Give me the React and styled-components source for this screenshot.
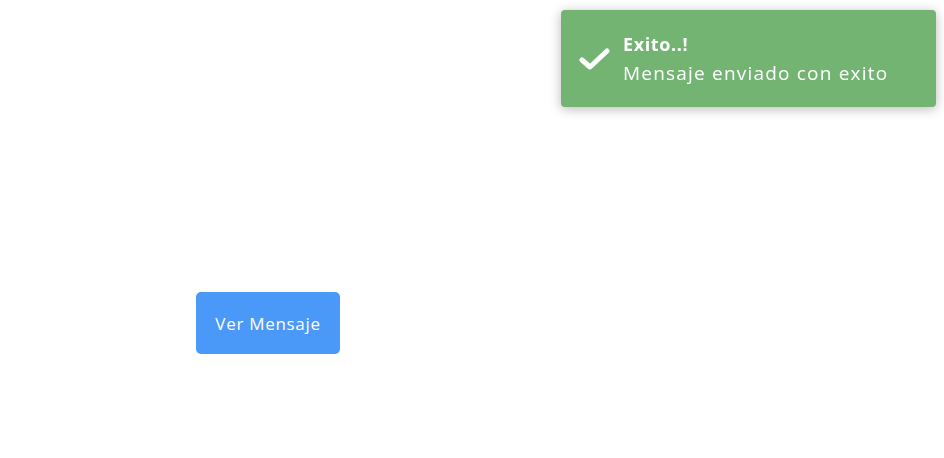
import styled, { createGlobalStyle } from "styled-components";

const GlobalStyle = createGlobalStyle`
    html, body {
        margin: 0;
        padding: 0;
        background: #ffffff;
        font-family: "Open Sans", "Liberation Sans", sans-serif;
    }
`;

const SPage = styled.main`
    min-height: 458px;
    padding: 292px 0 0 196px;
    box-sizing: border-box;
`;

const SButton = styled.button`
    width: 144px;
    height: 62px;
    padding: 0;
    border: none;
    border-radius: 5px;
    background: #4a99f8;
    color: #ffffff;
    font-family: inherit;
    font-size: 17px;
    letter-spacing: 0.7px;
    cursor: pointer;
`;

const SToast = styled.div`
    position: fixed;
    top: 10px;
    right: 8px;
    width: 375px;
    height: 97px;
    box-sizing: border-box;
    display: flex;
    align-items: center;
    gap: 13px;
    padding: 0 0 0 17px;
    background: #73b473;
    border-radius: 4px;
    color: #ffffff;
    box-shadow: 0 2px 12px rgba(0, 0, 0, 0.28);
`;

const SToastText = styled.div`
    display: flex;
    flex-direction: column;
    gap: 5px;
    margin-top: 2px;
`;

const SToastTitle = styled.strong`
    font-size: 18px;
    line-height: 22px;
    font-weight: 700;
    letter-spacing: 0.6px;
`;

const SToastMessage = styled.span`
    font-size: 19px;
    line-height: 26px;
    letter-spacing: 1.2px;
`;

function CheckIcon() {
    return (
        <svg width="32" height="24" viewBox="0 0 32 24">
            <path d="M4 13 L12 20 L29 4" fill="none" stroke="#ffffff" strokeWidth="5" strokeLinecap="round" strokeLinejoin="round" />
        </svg>
    );
}

export default function App() {
    return (
        <>
            <GlobalStyle />
            <SPage>
                <SButton>Ver Mensaje</SButton>
            </SPage>
            <SToast>
                <CheckIcon />
                <SToastText>
                    <SToastTitle>Exito..!</SToastTitle>
                    <SToastMessage>Mensaje enviado con exito</SToastMessage>
                </SToastText>
            </SToast>
        </>
    );
}
